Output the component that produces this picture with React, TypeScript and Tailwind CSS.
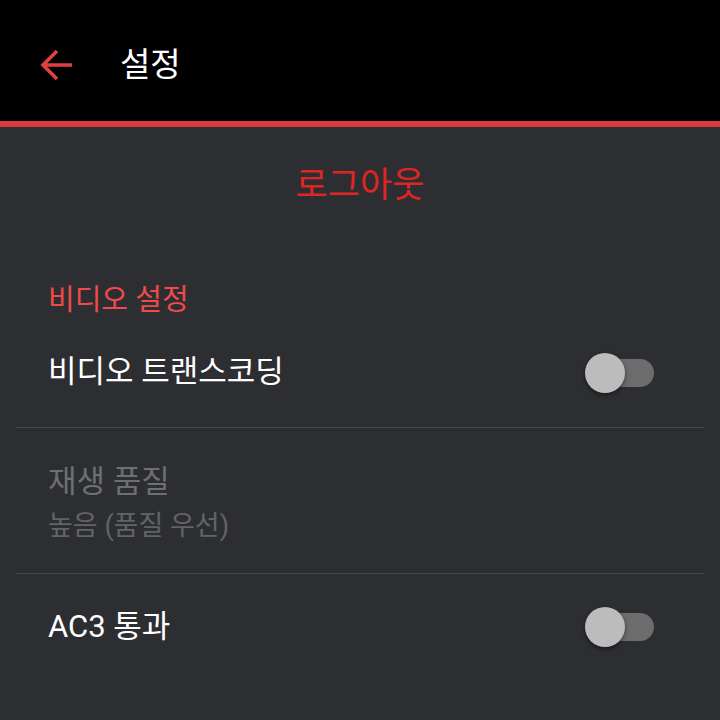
import React from 'react';

const font = { fontFamily: '"Roboto", "Noto Sans CJK KR", sans-serif' };

const Toggle: React.FC = () => (
  <div className="relative w-[69px] h-[40px] flex items-center">
    <div className="ml-[1px] w-[68px] h-[28px] rounded-full bg-[#6c6c6c]" />
    <div className="absolute left-0 top-0 w-[40px] h-[40px] rounded-full bg-[#bcbcbc] shadow-[0_2px_4px_rgba(0,0,0,0.45)]" />
  </div>
);

export default function App() {
  return (
    <div className="w-[720px] h-[720px] overflow-hidden bg-[#2d2e31]" style={font}>
      <div className="h-[121px] bg-black flex items-center pt-[8px]">
        <div className="w-[120px] pl-[40px]">
          <svg width="32" height="32" viewBox="0 0 32 32" fill="none" className="block">
            <path d="M32 16H3M17 2L3 16L17 30" stroke="#e0403f" strokeWidth="3.6" />
          </svg>
        </div>
        <span className="text-[33px] text-white leading-none">설정</span>
      </div>
      <div className="h-[6px] bg-[#dc3a3e]" />

      <div className="h-[118px] flex items-center justify-center">
        <span className="text-[35px] text-[#e02424] leading-[40px]">로그아웃</span>
      </div>

      <div className="pt-[37px] px-12 text-[29px] text-[#f04a4a] leading-[36px]">비디오 설정</div>

      <div className="mx-4">
        <div className="h-[110px] flex items-center justify-between pl-8 pr-[50px] border-b border-[#444549]">
          <span className="text-[31px] text-white">비디오 트랜스코딩</span>
          <Toggle />
        </div>
        <div className="h-[146px] flex flex-col justify-center pl-8 pt-[6px] border-b border-[#444549]">
          <span className="text-[31px] text-[#6e6f71] leading-[40px]">재생 품질</span>
          <span className="text-[27px] text-[#626366] leading-[40px] mt-[4px]">높음 (품질 우선)</span>
        </div>
        <div className="h-[106px] flex items-center justify-between pl-8 pr-[50px]">
          <span className="text-[31px] text-white">AC3 통과</span>
          <Toggle />
        </div>
      </div>
    </div>
  );
}
